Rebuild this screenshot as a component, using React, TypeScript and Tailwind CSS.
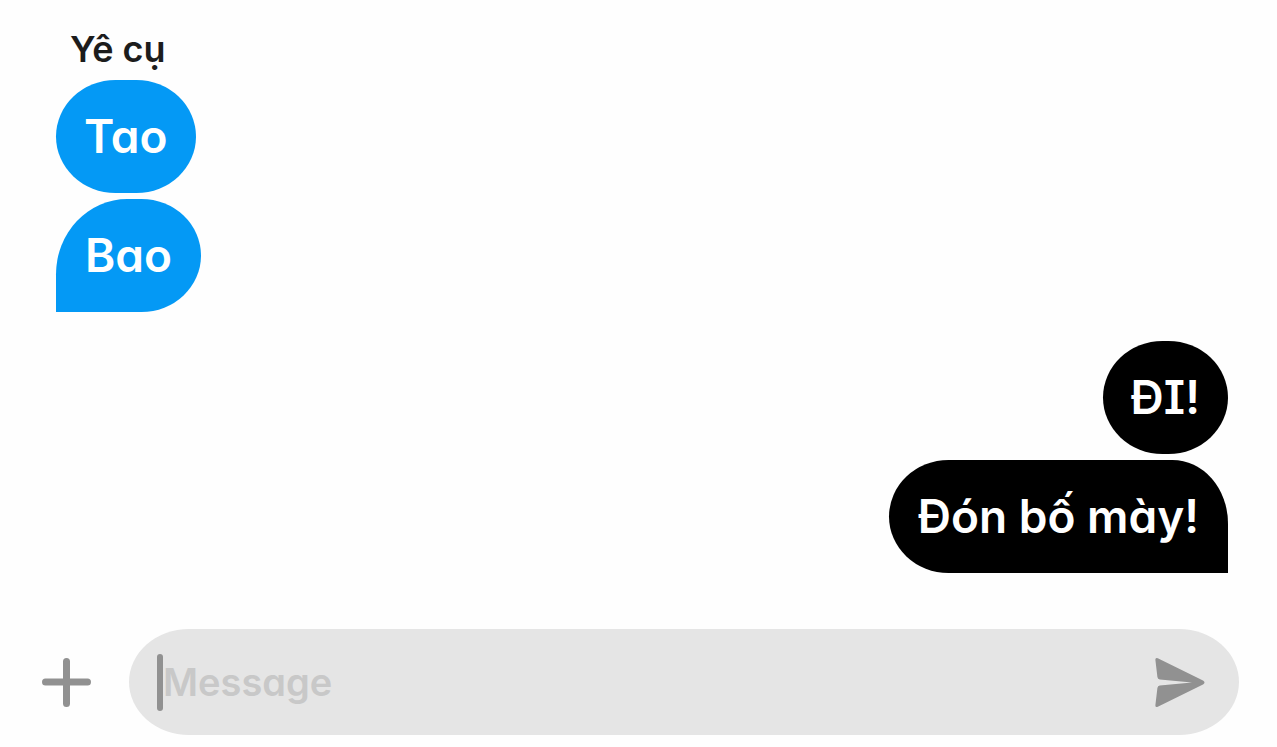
import clsx from 'clsx';
import { useState } from 'react';

type Message = {
  id: number;
  text: string;
  mine: boolean;
  tail: boolean;
};

const messages: Message[] = [
  { id: 1, text: 'Tao', mine: false, tail: false },
  { id: 2, text: 'Bao', mine: false, tail: true },
  { id: 3, text: 'ĐI!', mine: true, tail: false },
  { id: 4, text: 'Đón bố mày!', mine: true, tail: true },
];

function Bubble({ text, mine, tail }: Message) {
  return (
    <li
      className={clsx(
        'flex h-[113px] items-center text-[46px] font-semibold text-white',
        mine ? 'bg-black' : 'bg-[#0499f5]',
        tail ? 'px-[29px]' : 'px-7',
        !tail && 'rounded-[60px/57px]',
        tail && mine && 'rounded-[60px_56px_0px_60px/57px_64px_0px_57px]',
        tail && !mine && 'rounded-[72px_60px_60px_0px/76px_57px_57px_0px]'
      )}
    >
      {text}
    </li>
  );
}

export default function App() {
  const [draft, setDraft] = useState('');

  return (
    <div className="flex min-h-screen flex-col justify-between bg-[#fefefe] font-['Inter',sans-serif] [font-feature-settings:'cv11','cv08']">
      <main className="pl-14 pr-[49px] pt-7">
        <h1 className="h-[52px] pl-[14px] text-[36px] font-semibold leading-[42px] text-[#1c1c1c]">Yê cụ</h1>
        <ul className="flex flex-col items-start gap-[6px]">
          {messages.filter((m) => !m.mine).map((m) => (
            <Bubble key={m.id} {...m} />
          ))}
        </ul>
        <ul className="mt-[29px] flex flex-col items-end gap-[6px]">
          {messages.filter((m) => m.mine).map((m) => (
            <Bubble key={m.id} {...m} />
          ))}
        </ul>
      </main>

      <form className="flex items-center pb-3 pl-[42px] pr-[38px]" onSubmit={(e) => e.preventDefault()}>
        <button type="button" aria-label="Add attachment" className="mr-[38px] shrink-0">
          <svg className="size-[49px]" viewBox="0 0 49 49" fill="none" stroke="#919191" strokeWidth="7" strokeLinecap="round">
            <path d="M24.5 3.5v42M3.5 24h42" />
          </svg>
        </button>
        <div className="flex h-[106px] min-w-0 grow items-center rounded-[60px/53px] bg-[#e5e5e5] pl-7 pr-[34px]">
          <span className="h-[57px] w-[6px] shrink-0 rounded-full bg-[#919191]" />
          <input
            type="text"
            aria-label="Message"
            placeholder="Message"
            value={draft}
            onChange={(e) => setDraft(e.target.value)}
            className="min-w-0 grow bg-transparent text-[38px] font-semibold text-[#1c1c1c] caret-transparent outline-none placeholder:text-[#c8c8c8]"
          />
          <button type="submit" aria-label="Send" className="shrink-0">
            <svg className="h-[51px] w-[50px]" viewBox="0 0 50 51" fill="#919191">
              <path d="M2.8 1.2 48 23.6q3 1.9 0 3.8L2.8 49.8Q.2 50.8.4 48L2.4 31q.3-2.3 2.4-2.5L37 25.5 4.8 22.5Q2.7 22.1 2.4 20L.4 3Q.2.2 2.8 1.2Z" />
            </svg>
          </button>
        </div>
      </form>
    </div>
  );
}
